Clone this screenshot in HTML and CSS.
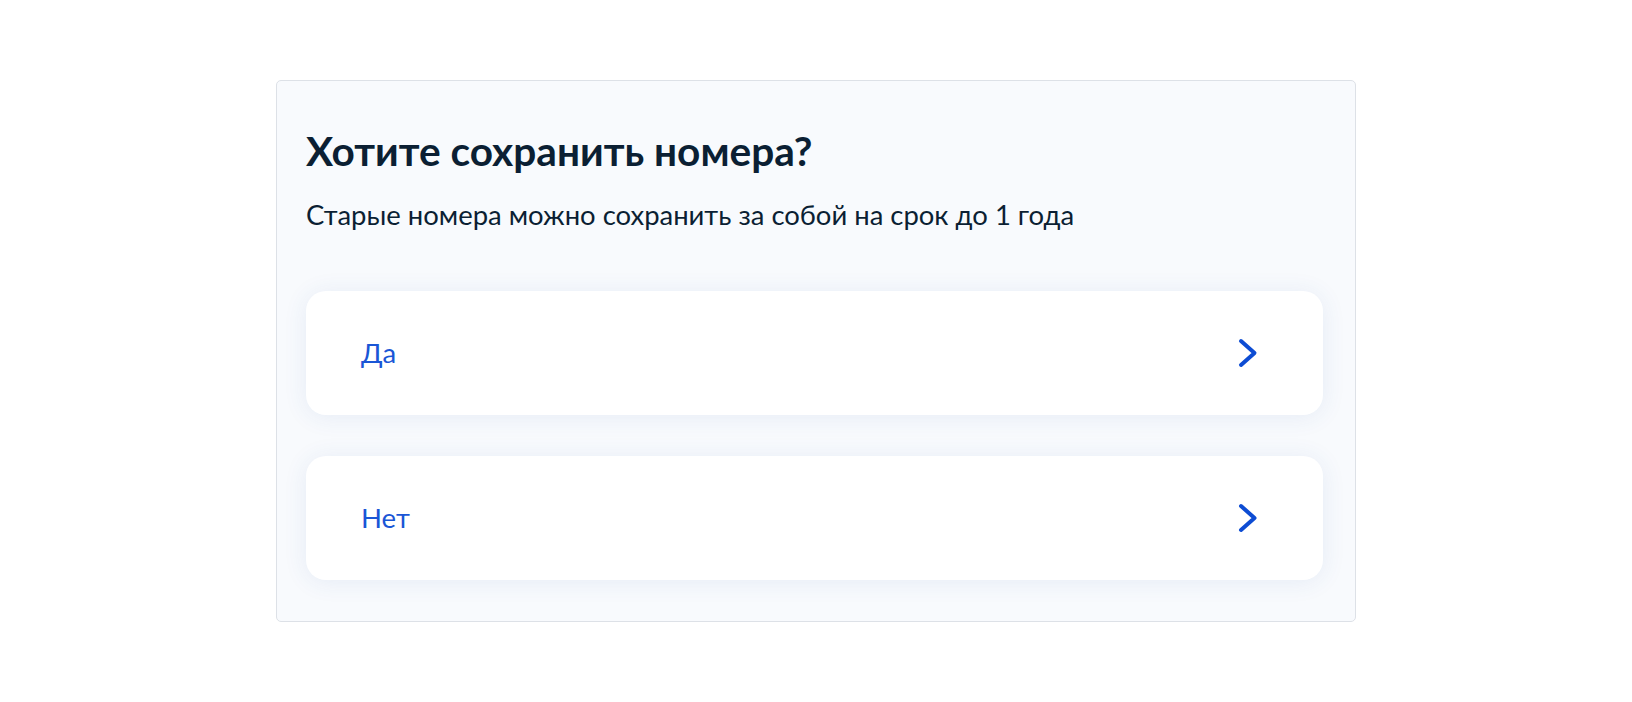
FILE: index.html
```html
<!DOCTYPE html>
<html lang="ru">
<head>
<meta charset="utf-8">
<title>Хотите сохранить номера?</title>
<link rel="stylesheet" href="styles.css">
</head>
<body>
<main class="page">
  <section class="card">
    <h2 class="title">Хотите сохранить номера?</h2>
    <p class="subtitle">Старые номера можно сохранить за собой на срок до 1 года</p>
    <div class="options">
      <a class="option" href="#">
        <span class="option-label">Да</span>
        <svg class="chevron" width="22" height="30" viewBox="0 0 22 30" aria-hidden="true"><path d="M4 3 L17.5 15 L4 27" fill="none" stroke="#0d4cd3" stroke-width="4" stroke-linecap="round" stroke-linejoin="round"/></svg>
      </a>
      <a class="option" href="#">
        <span class="option-label">Нет</span>
        <svg class="chevron" width="22" height="30" viewBox="0 0 22 30" aria-hidden="true"><path d="M4 3 L17.5 15 L4 27" fill="none" stroke="#0d4cd3" stroke-width="4" stroke-linecap="round" stroke-linejoin="round"/></svg>
      </a>
    </div>
  </section>
</main>
</body>
</html>
```
FILE: styles.css
```css
html, body {
  margin: 0;
  padding: 0;
  background: #ffffff;
}
body {
  font-family: Lato, "Noto Sans", "Liberation Sans", sans-serif;
  color: #0b1f33;
}
.page {
  padding-top: 80px;
  display: flex;
  justify-content: center;
}
.card {
  width: 1080px;
  box-sizing: border-box;
  background: #f8fafd;
  border: 1px solid #dde1e7;
  border-radius: 5px;
  padding: 46px 32px 41px 29px;
}
.title {
  margin: 0;
  font-size: 40.6px;
  line-height: 48px;
  font-weight: 700;
  color: #0b1f33;
}
.subtitle {
  margin: 22px 0 0;
  font-size: 27.45px;
  line-height: 36px;
  color: #0b1f33;
}
.options {
  margin-top: 58px;
  display: flex;
  flex-direction: column;
  gap: 41px;
}
.option {
  display: flex;
  align-items: center;
  justify-content: space-between;
  height: 124px;
  box-sizing: border-box;
  padding: 0 64px 0 55px;
  background: #ffffff;
  border-radius: 20px;
  box-shadow: 0 2px 24px rgba(40, 90, 170, 0.09);
  text-decoration: none;
}
.option-label {
  font-size: 27.5px;
  line-height: 36px;
  color: #1a56d6;
}
.chevron {
  display: block;
}
```
